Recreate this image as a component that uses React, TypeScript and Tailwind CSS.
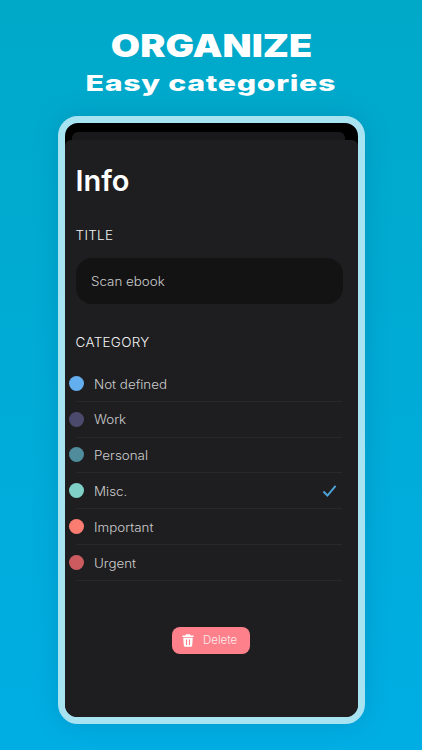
const categories = [
  { name: "Not defined", color: "bg-[#63aeee]" },
  { name: "Work", color: "bg-[#4c4a6c]" },
  { name: "Personal", color: "bg-[#4f8c9c]" },
  { name: "Misc.", color: "bg-[#7fd1c7]", checked: true },
  { name: "Important", color: "bg-[#fb7d72]" },
  { name: "Urgent", color: "bg-[#cc5b60]" },
];

function CategoryRow({ name, color, checked }: { name: string; color: string; checked?: boolean }) {
  return (
    <div className="flex h-[35.8px] items-center border-b border-[#28282a]">
      <span className={`-ml-[6.5px] size-[15px] shrink-0 rounded-full ${color}`} />
      <span className="ml-[9.5px] origin-left scale-x-[1.07] pt-[3px] text-[12.5px] font-light text-[#cccccc]">{name}</span>
      {checked && (
        <svg viewBox="0 0 16 14" className="ml-auto mr-[5px] mt-[1px] h-[14px] w-[15px]" fill="none">
          <path d="M1.5 7.5 L5.8 11.8 L14.5 1.5" stroke="#4ea5dc" strokeWidth="2" />
        </svg>
      )}
    </div>
  );
}

export default function App() {
  return (
    <div
      className="flex h-[750px] w-[422px] flex-col items-center overflow-hidden bg-gradient-to-b from-[#00a9c8] to-[#00aee4] [font-family:Inter,sans-serif]"
    >
      <h1 className="mt-[27px] origin-center scale-x-[1.22] text-[31px] leading-[37px] font-black text-white">
        ORGANIZE
      </h1>
      <h2 className="mt-[5px] origin-center scale-x-[1.38] text-[22px] leading-[28px] font-extrabold tracking-[0.5px] text-white">
        Easy categories
      </h2>

      <div className="mt-[19px] h-[608px] w-[307px] rounded-[20px] border-[7.5px] border-[#a8e3f2] bg-black shadow-[0_0_24px_rgba(0,90,140,0.25)]">
        <div className="flex h-full flex-col overflow-hidden rounded-[12px]">
          <div className="mx-[7px] mt-[9px] h-[8px] w-[273px] shrink-0 rounded-t-[6px] bg-[#19191b]" />
          <div className="flex flex-1 flex-col rounded-t-[6px] bg-[#1e1e20] pl-[11px] pr-[15px]">
            <div className="mt-[21px] text-[29px] leading-[40px] font-semibold text-white">Info</div>

            <div className="mt-[24px] text-[13.5px] leading-[20px] font-light tracking-[0.3px] text-[#f2f2f2]">TITLE</div>
            <div className="mt-[13px] flex h-[46px] items-center rounded-[16px] bg-[#131314] pl-[15px] text-[12.5px] font-light text-[#cccccc]">
              <span className="origin-left scale-x-[1.07] pt-[3px]">Scan ebook</span>
            </div>

            <div className="mt-[28px] text-[13.5px] leading-[20px] font-light tracking-[0.3px] text-[#f2f2f2]">CATEGORY</div>
            <div className="mr-[1px] mt-[14px] flex flex-col">
              {categories.map((c) => (
                <CategoryRow key={c.name} {...c} />
              ))}
            </div>

            <button className="mx-auto mt-[46px] flex h-[27px] w-[78px] translate-x-[2px] items-center rounded-[8px] bg-[#fd808b] pl-[10px]">
              <svg viewBox="0 0 12 13" className="h-[13px] w-[12px]" fill="#fff">
                <path d="M4 0.3 H8 L8.6 1.5 H11.6 V3 H0.4 V1.5 H3.4 Z" />
                <path fillRule="evenodd" d="M1.2 3.8 H10.8 L10.2 11.6 Q10.1 12.8 9 12.8 H3 Q1.9 12.8 1.8 11.6 Z M4 5.5 V11 H5.1 V5.5 Z M6.9 5.5 V11 H8 V5.5 Z" />
              </svg>
              <span className="ml-[9px] pt-[1px] text-[11.5px] font-light text-[#fdeaec]">Delete</span>
            </button>
          </div>
        </div>
      </div>
    </div>
  );
}
